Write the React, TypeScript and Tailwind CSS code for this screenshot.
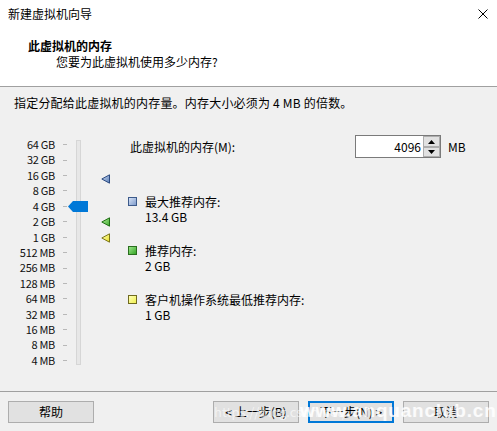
import React from "react";

const font = { fontFamily: '"Noto Sans CJK SC", "Noto Sans", sans-serif' };

const labels = [
  "64 GB", "32 GB", "16 GB", "8 GB", "4 GB", "2 GB", "1 GB",
  "512 MB", "256 MB", "128 MB", "64 MB", "32 MB", "16 MB", "8 MB", "4 MB",
];

function Marker({ fill1, fill2, stroke }: { fill1: string; fill2: string; stroke: string }) {
  const id = "g" + fill1.replace("#", "");
  return (
    <svg width="10" height="10" viewBox="0 0 10 10">
      <defs>
        <linearGradient id={id} x1="0" y1="0" x2="1" y2="1">
          <stop offset="0" stopColor={fill1} />
          <stop offset="1" stopColor={fill2} />
        </linearGradient>
      </defs>
      <polygon points="8.5,0.8 8.5,9.2 0.8,5" fill={`url(#${id})`} stroke={stroke} strokeWidth="1" strokeLinejoin="round" />
    </svg>
  );
}

function Legend({ sq, border, title, value }: { sq: string; border: string; title: string; value: string }) {
  return (
    <div className="flex h-[30px]">
      <div className="w-[9px] h-[9px] mt-[3px] border" style={{ background: sq, borderColor: border }} />
      <div className="ml-[8px] flex flex-col text-[12px] leading-[15px] text-black">
        <span>{title}</span>
        <span>{value}</span>
      </div>
    </div>
  );
}

export default function App() {
  return (
    <div className="w-[497px] h-[431px] bg-[#f0f0f0] flex flex-col overflow-hidden relative text-black" style={font}>
      {/* Header */}
      <div className="h-[86px] bg-white flex flex-col">
        <div className="h-[28px] flex items-center justify-between pl-[8px] pr-[9px]">
          <span className="text-[12px] leading-[16px]">新建虚拟机向导</span>
          <svg width="10" height="10" viewBox="0 0 10 10">
            <path d="M0.5 0.5 L9.5 9.5 M9.5 0.5 L0.5 9.5" stroke="#000" strokeWidth="1" />
          </svg>
        </div>
        <div className="mt-[10px] pl-[28px] text-[12px] leading-[16px] font-bold">此虚拟机的内存</div>
        <div className="pl-[56px] text-[12px] leading-[16px]">您要为此虚拟机使用多少内存?</div>
      </div>
      <div className="h-px bg-[#a0a0a0]" />

      {/* Body */}
      <div className="flex-1 flex flex-col">
        <div className="pt-[8px] pl-[14px] text-[12px] leading-[16px] tracking-[0.2px]">
          指定分配给此虚拟机的内存量。内存大小必须为 4 MB 的倍数。
        </div>
        <div className="mt-[24px] flex">
          {/* Slider */}
          <div className="relative w-[128px] h-[235px] flex">
            <div className="w-[55px] pt-[2px] flex flex-col items-end">
              {labels.map((l) => (
                <div key={l} className="h-[15.43px] leading-[15.43px] text-[11px] tracking-[-0.3px] text-[#111]">
                  {l}
                </div>
              ))}
            </div>
            <div className="ml-[8px] w-[4px] pt-[2px] flex flex-col">
              {labels.map((l) => (
                <div key={l} className="h-[15.43px] flex items-center">
                  <div className="w-[4px] h-px bg-[#b8b8b8]" />
                </div>
              ))}
            </div>
            <div className="ml-[9px] mt-[5px] w-[5px] h-[225px] border border-[#d6d6d6] bg-[#e7e7e7]" />
            <div className="absolute left-[68px] top-[66px]">
              <svg width="20" height="11" viewBox="0 0 20 11">
                <polygon points="0,5.5 5,0 20,0 20,11 5,11" fill="#0078d7" />
              </svg>
            </div>
            <div className="absolute left-[101px] top-[39px]">
              <Marker fill1="#c9d8f0" fill2="#5b7fb8" stroke="#2b4a80" />
            </div>
            <div className="absolute left-[101px] top-[82px]">
              <Marker fill1="#b8f0a0" fill2="#3aa82a" stroke="#1f6e14" />
            </div>
            <div className="absolute left-[101px] top-[98px]">
              <Marker fill1="#ffffc0" fill2="#e8e020" stroke="#7a7418" />
            </div>
          </div>

          {/* Right panel */}
          <div className="flex flex-col">
            <div className="h-[23px] flex items-center">
              <span className="w-[227px] pl-[2px] text-[12px] leading-[16px]">此虚拟机的内存(M):</span>
              <div className="w-[86px] h-[23px] flex bg-white border border-[#7a7a7a]">
                <div className="flex-1 flex items-center justify-end pr-[2px] text-[12px] leading-[16px]">4096</div>
                <div className="w-[17px] flex flex-col bg-[#f0f0f0]">
                  <div className="h-[11px] border border-[#adadad] bg-[#e1e1e1] flex items-center justify-center">
                    <svg width="7" height="4" viewBox="0 0 7 4"><polygon points="3.5,0 7,4 0,4" fill="#000" /></svg>
                  </div>
                  <div className="h-[10px] border border-[#adadad] bg-[#e1e1e1] flex items-center justify-center">
                    <svg width="7" height="4" viewBox="0 0 7 4"><polygon points="0,0 7,0 3.5,4" fill="#000" /></svg>
                  </div>
                </div>
              </div>
              <span className="ml-[7px] text-[12px] leading-[16px]">MB</span>
            </div>
            <div className="mt-[36px] flex flex-col gap-[19px]">
              <Legend sq="linear-gradient(135deg,#d5e1f5,#7f9ccc)" border="#3c5a8a" title="最大推荐内存:" value="13.4 GB" />
              <Legend sq="linear-gradient(135deg,#9be58a,#35a526)" border="#2a6e1e" title="推荐内存:" value="2 GB" />
              <Legend sq="linear-gradient(135deg,#ffffb8,#f0f050)" border="#6f6a20" title="客户机操作系统最低推荐内存:" value="1 GB" />
            </div>
          </div>
        </div>
      </div>

      {/* Footer */}
      <div className="h-px bg-[#a0a0a0]" />
      <div className="h-[39px] pt-[9px] flex items-start text-[12px]">
        <button className="ml-[8px] w-[86px] h-[22px] border border-[#adadad] bg-[#e1e1e1] flex items-center justify-center leading-[16px]">
          帮助
        </button>
        <button className="ml-[119px] w-[86px] h-[22px] border border-[#adadad] bg-[#e1e1e1] flex items-center justify-center leading-[16px]">
          &lt; 上一步(B)
        </button>
        <button className="ml-[9px] w-[86px] h-[22px] border-2 border-[#0078d7] bg-[#e1e1e1] flex items-center justify-center leading-[16px]">
          下一步(N) &gt;
        </button>
        <button className="ml-[9px] w-[86px] h-[22px] border border-[#adadad] bg-[#e1e1e1] flex items-center justify-center leading-[16px]">
          取消
        </button>
      </div>

      {/* Watermark overlay */}
      <div className="absolute left-[214px] top-[403px] text-[13px] leading-[18px] text-white/60 pointer-events-none">
        https://blog.csdn.net/
      </div>
      <div
        className="absolute left-[300px] top-[400px] text-[19px] leading-[22px] font-bold text-white/85 tracking-[0.8px] pointer-events-none"
        style={{ fontFamily: '"Liberation Sans", sans-serif' }}
      >
        www.anquanclub.cn
      </div>
    </div>
  );
}
